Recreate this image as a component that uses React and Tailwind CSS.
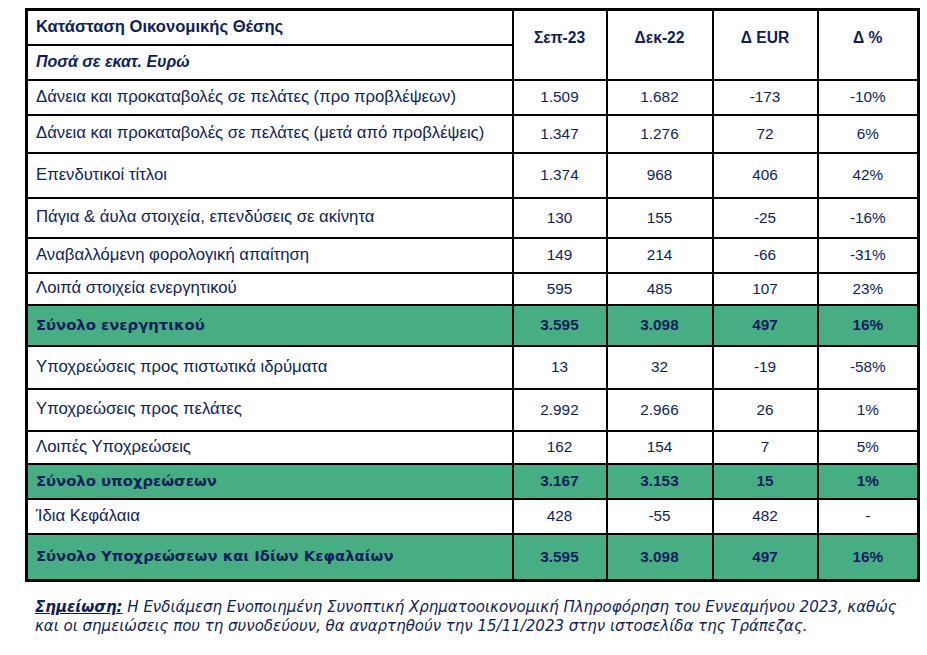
const rows = [
  { label: "Δάνεια και προκαταβολές σε πελάτες (προ προβλέψεων)", v: ["1.509", "1.682", "-173", "-10%"], h: "h-[35px]" },
  { label: "Δάνεια και προκαταβολές σε πελάτες (μετά από προβλέψεις)", v: ["1.347", "1.276", "72", "6%"], h: "h-[38px]" },
  { label: "Επενδυτικοί τίτλοι", v: ["1.374", "968", "406", "42%"], h: "h-[45px]" },
  { label: "Πάγια & άυλα στοιχεία, επενδύσεις σε ακίνητα", v: ["130", "155", "-25", "-16%"], h: "h-[40px]" },
  { label: "Αναβαλλόμενη φορολογική απαίτηση", v: ["149", "214", "-66", "-31%"], h: "h-[35px]" },
  { label: "Λοιπά στοιχεία ενεργητικού", v: ["595", "485", "107", "23%"], h: "h-[32px]" },
  { label: "Σύνολο ενεργητικού", v: ["3.595", "3.098", "497", "16%"], h: "h-[41px]", total: true },
  { label: "Υποχρεώσεις προς πιστωτικά ιδρύματα", v: ["13", "32", "-19", "-58%"], h: "h-[43px]" },
  { label: "Υποχρεώσεις προς πελάτες", v: ["2.992", "2.966", "26", "1%"], h: "h-[42px]" },
  { label: "Λοιπές Υποχρεώσεις", v: ["162", "154", "7", "5%"], h: "h-[33px]" },
  { label: "Σύνολο υποχρεώσεων", v: ["3.167", "3.153", "15", "1%"], h: "h-[35px]", total: true },
  { label: "Ίδια Κεφάλαια", v: ["428", "-55", "482", "-"], h: "h-[35px]" },
  { label: "Σύνολο Υποχρεώσεων και Ιδίων Κεφαλαίων", v: ["3.595", "3.098", "497", "16%"], h: "h-[47px]", total: true },
];

const cell = "border-2 border-black";

export default function App() {
  return (
    <div className="w-[927px] h-[655px] bg-white pt-[8px] pl-[25px] text-[#0d1e5c] font-['Liberation_Sans',Arial,sans-serif]">
      <table className="table-fixed border-collapse border-[3px] border-black text-[15.3px] leading-none">
        <colgroup>
          <col className="w-[486px]" />
          <col className="w-[94px]" />
          <col className="w-[106px]" />
          <col className="w-[105px]" />
          <col className="w-[101px]" />
        </colgroup>
        <thead>
          <tr className="h-[35px]">
            <th className={`${cell} text-left font-bold px-[8px] text-[16.6px]`}>Κατάσταση Οικονομικής Θέσης</th>
            {["Σεπ-23", "Δεκ-22", "Δ EUR", "Δ %"].map((t) => (
              <th key={t} rowSpan={2} className={`${cell} text-center font-bold align-top pt-[19px] text-[15.6px]`}>
                {t}
              </th>
            ))}
          </tr>
          <tr className="h-[35px]">
            <th className={`${cell} text-left font-bold italic px-[8px] text-[16px]`}>Ποσά σε εκατ. Ευρώ</th>
          </tr>
        </thead>
        <tbody>
          {rows.map((r) => (
            <tr key={r.label} className={`${r.h} ${r.total ? "bg-[#47ae84] font-bold" : ""}`}>
              <td
                className={`${cell} px-[8px] ${
                  r.total ? "font-['DejaVu_Sans',Verdana,sans-serif] text-[14.8px]" : "text-[16.7px]"
                }`}
              >
                {r.label}
              </td>
              {r.v.map((x, i) => (
                <td key={i} className={`${cell} text-center`}>
                  {x}
                </td>
              ))}
            </tr>
          ))}
        </tbody>
      </table>
      <p className="mt-[16px] pl-[10px] text-[15px] leading-[19px] italic font-['DejaVu_Sans',Verdana,sans-serif] whitespace-nowrap">
        <span className="font-bold underline">Σημείωση:</span> Η Ενδιάμεση Ενοποιημένη Συνοπτική Χρηματοοικονομική Πληροφόρηση του Εννεαμήνου 2023, καθώς
        <br />
        και οι σημειώσεις που τη συνοδεύουν, θα αναρτηθούν την 15/11/2023 στην ιστοσελίδα της Τράπεζας.
      </p>
    </div>
  );
}
